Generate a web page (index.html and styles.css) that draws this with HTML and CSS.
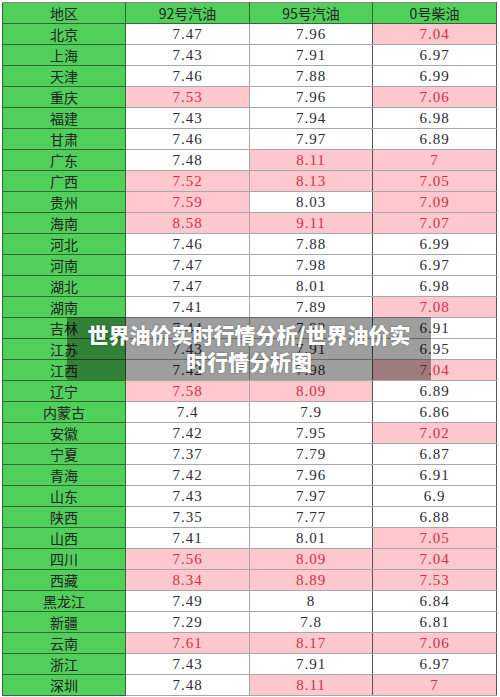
FILE: index.html
```html
<!DOCTYPE html>
<html lang="zh-CN">
<head>
    <meta charset="UTF-8">
    <meta name="viewport" content="width=device-width, initial-scale=1.0">
    <title>世界油价实时行情分析</title>
    <link rel="stylesheet" href="styles.css">
</head>
<body>
    <div class="sheet">
        <table class="prices">
            <colgroup>
                <col class="w1"><col class="w2"><col class="w3"><col class="w4">
            </colgroup>
            <thead>
                <tr>
                    <th>地区</th>
                    <th>92号汽油</th>
                    <th>95号汽油</th>
                    <th>0号柴油</th>
                </tr>
            </thead>
            <tbody id="rows"></tbody>
        </table>
        <div class="caption">世界油价实时行情分析/世界油价实<br>时行情分析图</div>
    </div>
    <script>
        // region, 92, 95, 0 -- "!" marks a rise (pink cell)
        const DATA = [
            ['北京', '7.47', '7.96', '!7.04'],
            ['上海', '7.43', '7.91', '6.97'],
            ['天津', '7.46', '7.88', '6.99'],
            ['重庆', '!7.53', '7.96', '!7.06'],
            ['福建', '7.43', '7.94', '6.98'],
            ['甘肃', '7.46', '7.97', '6.89'],
            ['广东', '7.48', '!8.11', '!7'],
            ['广西', '!7.52', '!8.13', '!7.05'],
            ['贵州', '!7.59', '8.03', '!7.09'],
            ['海南', '!8.58', '!9.11', '!7.07'],
            ['河北', '7.46', '7.88', '6.99'],
            ['河南', '7.47', '7.98', '6.97'],
            ['湖北', '7.47', '8.01', '6.98'],
            ['湖南', '7.41', '7.89', '!7.08'],
            ['吉林', '7.44', '7.92', '6.91'],
            ['江苏', '7.43', '7.91', '6.95'],
            ['江西', '7.42', '7.98', '!7.04'],
            ['辽宁', '!7.58', '!8.09', '6.89'],
            ['内蒙古', '7.4', '7.9', '6.86'],
            ['安徽', '7.42', '7.95', '!7.02'],
            ['宁夏', '7.37', '7.79', '6.87'],
            ['青海', '7.42', '7.96', '6.91'],
            ['山东', '7.43', '7.97', '6.9'],
            ['陕西', '7.35', '7.77', '6.88'],
            ['山西', '7.41', '8.01', '!7.05'],
            ['四川', '!7.56', '!8.09', '!7.04'],
            ['西藏', '!8.34', '!8.89', '!7.53'],
            ['黑龙江', '7.49', '8', '6.84'],
            ['新疆', '7.29', '7.8', '6.81'],
            ['云南', '!7.61', '!8.17', '!7.06'],
            ['浙江', '7.43', '7.91', '6.97'],
            ['深圳', '7.48', '!8.11', '!7']
        ]
        const COLS = ['p92', 'p95', 'p0']
        const tbody = document.getElementById('rows')

        DATA.forEach(row => {
            const tr = document.createElement('tr')
            const name = document.createElement('td')
            name.className = 'region'
            name.textContent = row[0]
            tr.appendChild(name)
            row.slice(1).forEach((val, i) => {
                const td = document.createElement('td')
                td.className = 'num ' + COLS[i]
                if (val[0] === '!') {
                    td.classList.add('up')
                    val = val.slice(1)
                }
                td.textContent = val
                tr.appendChild(td)
            })
            tbody.appendChild(tr)
        })
    </script>
</body>
</html>
```

FILE: styles.css
```css
body {
    margin: 0;
    background: #fff;
    font-family: "Noto Sans CJK SC", sans-serif;
}
.sheet {
    position: relative;
    padding: 2px 0 0 2px;
}
.prices {
    border-collapse: collapse;
    table-layout: fixed;
    width: 495px;
}
.w1 { width: 123px; }
.w2 { width: 124px; }
.w3 { width: 123px; }
.w4 { width: 124px; }
.prices th,
.prices td {
    height: 20px;
    padding: 0;
    line-height: 20px;
    text-align: center;
    border: 1px solid #a8a8a8;
    overflow: hidden;
    white-space: nowrap;
}
.prices th {
    background: #50d05a;
    border-color: #2f6a31;
    border-top-color: #8a8a8a;
    font-weight: normal;
    font-size: 14px;
    color: #222;
}
.prices th:last-child {
    border-right-color: #555;
}
.region {
    background: #50d05a;
    border-color: #2f6a31 !important;
    font-size: 14px;
    color: #222;
}
.num {
    font-family: "Liberation Serif", serif;
    font-size: 15px;
    letter-spacing: 1px;
    color: #2d2d3a;
    background: #fff;
}
.p95 {
    border-right-color: #555 !important;
}
.p0 {
    border-right-color: #555 !important;
}
.up {
    background: #ffc7ce;
    color: #cc3344;
}
.caption {
    position: absolute;
    left: 67px;
    top: 317px;
    width: 364px;
    padding: 4px 0 5px;
    background: rgba(0, 0, 0, 0.38);
    color: #fff;
    font-weight: 900;
    font-size: 21px;
    line-height: 27px;
    text-align: center;
    text-shadow: 0 0 2px rgba(0, 0, 0, 0.4);
}
```
